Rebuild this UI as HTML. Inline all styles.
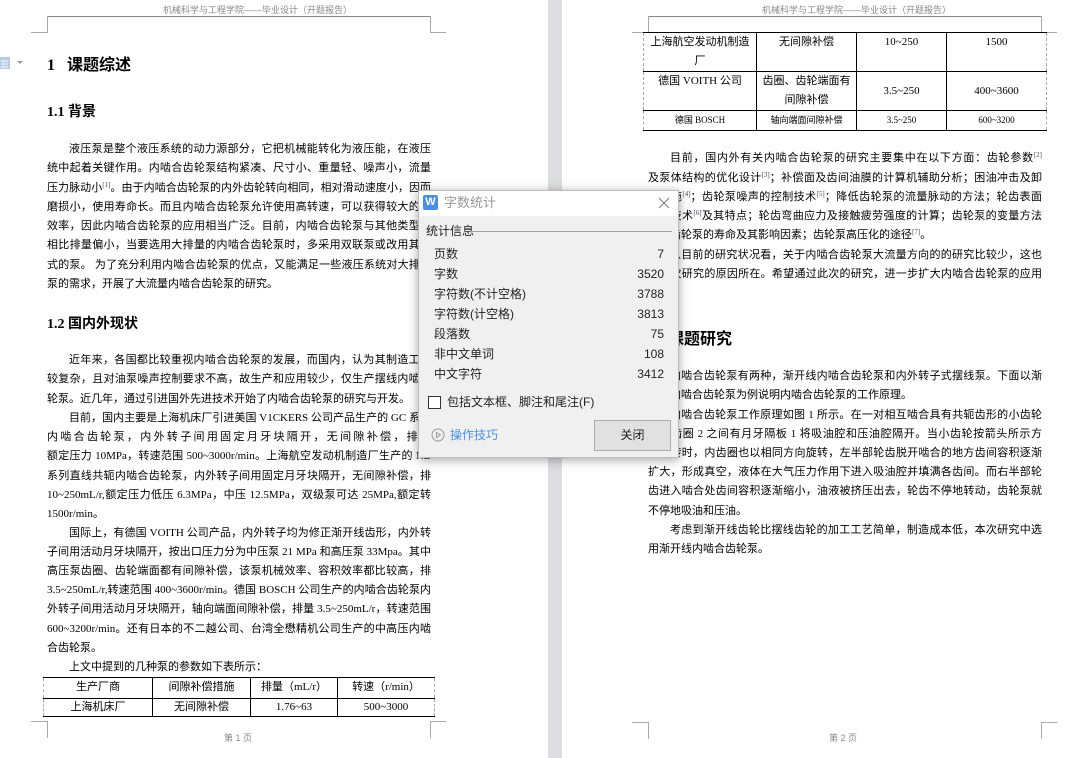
<!DOCTYPE html>
<html><head><meta charset="utf-8">
<style>
*{margin:0;padding:0;box-sizing:border-box}
body{width:1084px;height:758px;overflow:hidden;background:#fff;position:relative;font-family:"Liberation Serif","Noto Sans CJK SC",serif;color:#000}
.a{position:absolute}
.gap{left:548px;top:0;width:14px;height:758px;background:#dcdddf}
.hd{font-size:9px;color:#888;white-space:nowrap;font-family:"Liberation Sans","Noto Sans CJK SC",sans-serif}
.hl{height:1px;background:#888}
.mk{background:#aaa}
.l{position:absolute;height:19px;line-height:19px;font-size:11px;overflow:hidden;text-align:justify;text-align-last:justify;white-space:normal}
.L{left:47px;width:384px}
.R{left:648px;width:394px}
.e{text-align-last:left}
.i{text-indent:22px}
sup{font-size:7px;color:#446;line-height:0;vertical-align:4px}
.h1{font-size:16px;font-weight:bold;white-space:nowrap}
.h2{font-size:14px;font-weight:bold;white-space:nowrap}
table{border-collapse:collapse;position:absolute;font-size:11px}
td{border:1px solid #000;text-align:center;vertical-align:top;padding:0;line-height:19px}
.dlg{left:418px;top:190px;width:261px;height:268px;background:#f0f0f0;border:1px solid #bbb;box-shadow:0 2px 10px rgba(0,0,0,.35);font-family:"Liberation Sans","Noto Sans CJK SC",sans-serif;font-size:12px;color:#222}
.row{position:absolute;left:15px;width:230px;height:20px;line-height:20px}
.row span{float:right}
</style></head><body>
<!-- left page -->
<div class="a hd" style="left:163px;top:3px">机械科学与工程学院——毕业设计（开题报告）</div>
<div class="a hl" style="left:47px;top:16px;width:383px"></div>
<div class="a mk" style="left:47px;top:16px;width:1px;height:17px"></div>
<div class="a mk" style="left:430px;top:16px;width:1px;height:17px"></div>
<div class="a mk" style="left:31px;top:32px;width:16px;height:1px"></div>
<div class="a mk" style="left:430px;top:32px;width:16px;height:1px"></div>
<svg class="a" style="left:0;top:55px" width="26" height="16"><rect x="0" y="2" width="10" height="12" fill="#b8cbe6"/><path d="M1 6h7M1 9h7M1 12h7" stroke="#fff"/><path d="M17 6l3 3 3-3z" fill="#999"/></svg>
<div class="a h1" style="left:47px;top:51px">1&nbsp;&nbsp;&nbsp;课题综述</div>
<div class="a h2" style="left:47px;top:101px">1.1 背景</div>
<div class="l L i" style="top:140px">液压泵是整个液压系统的动力源部分，它把机械能转化为液压能，在液压系</div>
<div class="l L" style="top:159px">统中起着关键作用。内啮合齿轮泵结构紧凑、尺寸小、重量轻、噪声小，流量和</div>
<div class="l L" style="top:179px">压力脉动小<sup>[1]</sup>。由于内啮合齿轮泵的内外齿轮转向相同，相对滑动速度小，因而</div>
<div class="l L" style="top:198px">磨损小，使用寿命长。而且内啮合齿轮泵允许使用高转速，可以获得较大的容积</div>
<div class="l L" style="top:217px">效率，因此内啮合齿轮泵的应用相当广泛。目前，内啮合齿轮泵与其他类型的泵</div>
<div class="l L" style="top:236px">相比排量偏小，当要选用大排量的内啮合齿轮泵时，多采用双联泵或改用其他形</div>
<div class="l L" style="top:256px">式的泵。 为了充分利用内啮合齿轮泵的优点，又能满足一些液压系统对大排量</div>
<div class="l L e" style="top:275px">泵的需求，开展了大流量内啮合齿轮泵的研究。</div>
<div class="a h2" style="left:47px;top:313px">1.2 国内外现状</div>
<div class="l L i" style="top:351px">近年来，各国都比较重视内啮合齿轮泵的发展，而国内，认为其制造工艺比</div>
<div class="l L" style="top:370px">较复杂，且对油泵噪声控制要求不高，故生产和应用较少，仅生产摆线内啮合齿</div>
<div class="l L e" style="top:390px">轮泵。近几年，通过引进国外先进技术开始了内啮合齿轮泵的研究与开发。</div>
<div class="l L i" style="top:409px">目前，国内主要是上海机床厂引进美国 V1CKERS 公司产品生产的 GC 系列</div>
<div class="l L" style="top:428px">内啮合齿轮泵，内外转子间用固定月牙块隔开，无间隙补偿，排量 1.76~63mL/r，</div>
<div class="l L" style="top:447px">额定压力 10MPa，转速范围 500~3000r/min。上海航空发动机制造厂生产的 NB</div>
<div class="l L" style="top:467px">系列直线共轭内啮合齿轮泵，内外转子间用固定月牙块隔开，无间隙补偿，排量</div>
<div class="l L" style="top:486px">10~250mL/r,额定压力低压 6.3MPa，中压 12.5MPa，双级泵可达 25MPa,额定转速</div>
<div class="l L e" style="top:505px">1500r/min。</div>
<div class="l L i" style="top:524px">国际上，有德国 VOITH 公司产品，内外转子均为修正渐开线齿形，内外转</div>
<div class="l L" style="top:543px">子间用活动月牙块隔开，按出口压力分为中压泵 21 MPa 和高压泵 33Mpa。其中</div>
<div class="l L" style="top:562px">高压泵齿圈、齿轮端面都有间隙补偿，该泵机械效率、容积效率都比较高，排量</div>
<div class="l L" style="top:581px">3.5~250mL/r,转速范围 400~3600r/min。德国 BOSCH 公司生产的内啮合齿轮泵内</div>
<div class="l L" style="top:600px">外转子间用活动月牙块隔开，轴向端面间隙补偿，排量 3.5~250mL/r，转速范围</div>
<div class="l L" style="top:620px">600~3200r/min。还有日本的不二越公司、台湾全懋精机公司生产的中高压内啮</div>
<div class="l L e" style="top:639px">合齿轮泵。</div>
<div class="l L e i" style="top:658px">上文中提到的几种泵的参数如下表所示：</div>
<table style="left:43px;top:677px;width:392px">
<tr style="height:21px"><td style="width:109px;border-left:1px dashed #aaa">生产厂商</td><td style="width:98px">间隙补偿措施</td><td style="width:87px">排量（mL/r）</td><td style="border-right:1px dashed #aaa">转速（r/min）</td></tr>
<tr style="height:18px"><td style="border-left:1px dashed #aaa;line-height:17px">上海机床厂</td><td style="line-height:17px">无间隙补偿</td><td style="line-height:17px">1.76~63</td><td style="border-right:1px dashed #aaa;line-height:17px">500~3000</td></tr>
</table>
<div class="a mk" style="left:31px;top:721px;width:16px;height:1px"></div>
<div class="a mk" style="left:47px;top:721px;width:1px;height:17px"></div>
<div class="a mk" style="left:430px;top:721px;width:16px;height:1px"></div>
<div class="a mk" style="left:430px;top:721px;width:1px;height:17px"></div>
<div class="a hd" style="left:224px;top:731px">第 1 页</div>

<div class="a gap"></div>

<!-- right page -->
<div class="a hd" style="left:762px;top:3px">机械科学与工程学院——毕业设计（开题报告）</div>
<div class="a hl" style="left:648px;top:16px;width:393px"></div>
<div class="a mk" style="left:648px;top:16px;width:1px;height:17px"></div>
<div class="a mk" style="left:1041px;top:16px;width:1px;height:17px"></div>
<div class="a mk" style="left:632px;top:32px;width:16px;height:1px"></div>
<div class="a mk" style="left:1041px;top:32px;width:16px;height:1px"></div>
<table style="left:643px;top:32px;width:404px">
<tr style="height:39px"><td style="width:113px;border-left:1px dashed #aaa">上海航空发动机制造<br>厂</td><td style="width:100px">无间隙补偿</td><td style="width:90px">10~250</td><td style="border-right:1px dashed #aaa">1500</td></tr>
<tr style="height:39px"><td style="border-left:1px dashed #aaa">德国 VOITH 公司</td><td>齿圈、齿轮端面有<br>间隙补偿</td><td style="vertical-align:middle">3.5~250</td><td style="vertical-align:middle;border-right:1px dashed #aaa">400~3600</td></tr>
<tr style="height:20px;font-size:9px"><td style="border-left:1px dashed #aaa">德国 BOSCH</td><td>轴向端面间隙补偿</td><td>3.5~250</td><td style="border-right:1px dashed #aaa">600~3200</td></tr>
</table>
<div class="l R i" style="top:149px">目前，国内外有关内啮合齿轮泵的研究主要集中在以下方面：齿轮参数<sup>[2]</sup></div>
<div class="l R" style="top:169px">及泵体结构的优化设计<sup>[3]</sup>；补偿面及齿间油膜的计算机辅助分析；困油冲击及卸</div>
<div class="l R" style="top:188px">荷措施<sup>[4]</sup>；齿轮泵噪声的控制技术<sup>[5]</sup>；降低齿轮泵的流量脉动的方法；轮齿表面</div>
<div class="l R" style="top:207px">强化技术<sup>[6]</sup>及其特点；轮齿弯曲应力及接触疲劳强度的计算；齿轮泵的变量方法</div>
<div class="l R e" style="top:226px">等；齿轮泵的寿命及其影响因素；齿轮泵高压化的途径<sup>[7]</sup>。</div>
<div class="l R i" style="top:246px">从目前的研究状况看，关于内啮合齿轮泵大流量方向的的研究比较少，这也</div>
<div class="l R" style="top:265px">是本次研究的原因所在。希望通过此次的研究，进一步扩大内啮合齿轮泵的应用</div>
<div class="l R e" style="top:284px">范围。</div>
<div class="a h1" style="left:648px;top:325px">2&nbsp;&nbsp;&nbsp;课题研究</div>
<div class="l R i" style="top:367px">内啮合齿轮泵有两种，渐开线内啮合齿轮泵和内外转子式摆线泵。下面以渐</div>
<div class="l R e" style="top:386px">开线内啮合齿轮泵为例说明内啮合齿轮泵的工作原理。</div>
<div class="l R i" style="top:406px">内啮合齿轮泵工作原理如图 1 所示。在一对相互啮合具有共轭齿形的小齿轮</div>
<div class="l R" style="top:425px">和内齿圈 2 之间有月牙隔板 1 将吸油腔和压油腔隔开。当小齿轮按箭头所示方</div>
<div class="l R" style="top:444px">向旋转时，内齿圈也以相同方向旋转，左半部轮齿脱开啮合的地方齿间容积逐渐</div>
<div class="l R" style="top:463px">扩大，形成真空，液体在大气压力作用下进入吸油腔并填满各齿间。而右半部轮</div>
<div class="l R" style="top:482px">齿进入啮合处齿间容积逐渐缩小，油液被挤压出去，轮齿不停地转动，齿轮泵就</div>
<div class="l R e" style="top:502px">不停地吸油和压油。</div>
<div class="l R i" style="top:521px">考虑到渐开线齿轮比摆线齿轮的加工工艺简单，制造成本低，本次研究中选</div>
<div class="l R e" style="top:540px">用渐开线内啮合齿轮泵。</div>
<div class="a mk" style="left:632px;top:722px;width:16px;height:1px"></div>
<div class="a mk" style="left:648px;top:722px;width:1px;height:17px"></div>
<div class="a mk" style="left:1041px;top:722px;width:16px;height:1px"></div>
<div class="a mk" style="left:1041px;top:722px;width:1px;height:17px"></div>
<div class="a hd" style="left:829px;top:731px">第 2 页</div>

<!-- dialog -->
<div class="a dlg">
  <div class="a" style="left:0;top:0;width:259px;height:25px;background:#fff"></div>
  <div class="a" style="left:4px;top:4px;width:15px;height:15px;background:#4a8fe7;border-radius:2px;color:#fff;font-size:11px;line-height:15px;text-align:center;font-weight:bold">W</div>
  <div class="a" style="left:25px;top:3px;font-size:13px;color:#999;line-height:18px">字数统计</div>
  <svg class="a" style="left:239px;top:6px" width="12" height="12"><path d="M1 1L11 11M11 1L1 11" stroke="#888" stroke-width="1.2"/></svg>
  <div class="a" style="left:7px;top:32px;font-size:12px;line-height:16px">统计信息</div>
  <div class="a" style="left:51px;top:40px;width:202px;height:1px;background:#a0a0a0"></div>
  <div class="row" style="top:53px">页数<span>7</span></div>
  <div class="row" style="top:73px">字数<span>3520</span></div>
  <div class="row" style="top:93px">字符数(不计空格)<span>3788</span></div>
  <div class="row" style="top:113px">字符数(计空格)<span>3813</span></div>
  <div class="row" style="top:133px">段落数<span>75</span></div>
  <div class="row" style="top:153px">非中文单词<span>108</span></div>
  <div class="row" style="top:173px">中文字符<span>3412</span></div>
  <div class="a" style="left:9px;top:205px;width:13px;height:13px;border:1px solid #333;background:#fff"></div>
  <div class="a" style="left:28px;top:203px;line-height:16px">包括文本框、脚注和尾注(F)</div>
  <svg class="a" style="left:12px;top:237px" width="14" height="14"><circle cx="7" cy="7" r="6" fill="none" stroke="#999"/><path d="M5.5 4.5L9.5 7L5.5 9.5Z" fill="none" stroke="#999"/></svg>
  <div class="a" style="left:31px;top:236px;color:#4a8fe7;line-height:16px">操作技巧</div>
  <div class="a" style="left:175px;top:229px;width:77px;height:31px;background:#e1e1e1;border:1px solid #adadad;text-align:center;line-height:29px">关闭</div>
</div>
</body></html>
